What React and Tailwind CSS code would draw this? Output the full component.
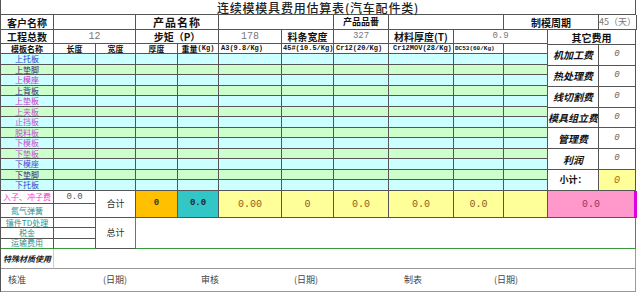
const cjk = { fontFamily: '"Noto Sans CJK SC", "Liberation Sans", sans-serif' };
const mono = { fontFamily: '"Liberation Mono", "Noto Sans CJK SC", monospace' };

const plates = [
  ['上托板', 'text-[#1f3fcf]'],
  ['上垫脚', 'text-[#1a2a80]'],
  ['上模座', 'text-[#cc33cc]'],
  ['上背板', 'text-[#1a2a80]'],
  ['上垫板', 'text-[#cc33cc]'],
  ['上夹板', 'text-[#c24fd0]'],
  ['止挡板', 'text-[#c24fd0]'],
  ['脱料板', 'text-[#c24fd0]'],
  ['下模板', 'text-[#c24fd0]'],
  ['下垫板', 'text-[#c24fd0]'],
  ['下模座', 'text-[#5a3fd0]'],
  ['下垫脚', 'text-[#1a2a80]'],
  ['下托板', 'text-[#1f3fcf]'],
];

const others = ['机加工费', '热处理费', '线切割费', '模具组立费', '管理费', '利润'];

function Cell({ className = '', style, children }) {
  return (
    <div
      style={style}
      className={`flex items-center justify-center overflow-hidden whitespace-nowrap border-r border-b border-[#555] ${className}`}
    >
      {children}
    </div>
  );
}

export default function App() {
  return (
    <div className="w-[640px] h-[293px] bg-white overflow-hidden" style={cjk}>
      <div className="w-[636px] border-l border-[#555]">
        {/* title */}
        <div className="h-[15px] pt-[1px] border-r border-b border-[#555] flex items-center justify-center text-[12px] font-medium leading-[13px] tracking-[0.8px] text-[#222]">
          连续模模具费用估算表(汽车配件类)
        </div>

        {/* row 1 */}
        <div className="h-[15px] grid grid-cols-[53px_82px_83px_115px_55px_115px_95px_38px] text-[#111]">
          <Cell className="text-[10px] font-bold">客户名称</Cell>
          <Cell />
          <Cell className="text-[11px] font-bold tracking-[1px]">产品名称</Cell>
          <Cell />
          <Cell className="text-[9px] font-bold">产品品番</Cell>
          <Cell />
          <Cell className="text-[10px] font-bold">制模周期</Cell>
          <Cell className="text-[9px] text-[#777]">45（天）</Cell>
        </div>

        {/* middle block */}
        <div className="flex">
          <div className="w-[547px]">
            <div className="h-[14px] grid grid-cols-[53px_82px_83px_63px_52px_55px_65px_94px] text-[#111]">
              <Cell className="text-[10px] font-bold">工程总数</Cell>
              <Cell className="text-[10px] text-[#777]" style={mono}>12</Cell>
              <Cell className="text-[10px] font-bold">步矩（P）</Cell>
              <Cell className="text-[10px] text-[#777]" style={mono}>178</Cell>
              <Cell className="text-[10px] font-bold">料条宽度</Cell>
              <Cell className="text-[9px] text-[#777]" style={mono}>327</Cell>
              <Cell className="text-[10px] font-bold">材料厚度(T)</Cell>
              <Cell className="text-[9px] text-[#777]" style={mono}>0.9</Cell>
            </div>
            <div className="h-[10px] grid grid-cols-[53px_42px_40px_42px_41px_63px_52px_55px_65px_50px_44px] text-[#111] font-bold leading-none">
              <Cell className="text-[8px]">模板名称</Cell>
              <Cell className="text-[8px]">长度</Cell>
              <Cell className="text-[8px]">宽度</Cell>
              <Cell className="text-[8px]">厚度</Cell>
              <Cell className="text-[8px]">重量<span style={mono} className="text-[7px]">(Kg)</span></Cell>
              <Cell className="text-[7px] justify-start pl-[2px]" style={mono}>A3(9.8/Kg)</Cell>
              <Cell className="text-[7px] justify-start pl-[1px]" style={mono}>45#(10.5/Kg)</Cell>
              <Cell className="text-[7px] justify-start pl-[2px]" style={mono}>Cr12(20/Kg)</Cell>
              <Cell className="text-[7px] justify-start pl-[4px]" style={mono}>Cr12MOV(28/Kg)</Cell>
              <Cell className="text-[6px] justify-start pl-[1px]" style={mono}>DC53(60/Kg)</Cell>
              <Cell />
            </div>
            {plates.map(([name, color], i) => (
              <div
                key={name}
                className={`grid grid-cols-[53px_42px_40px_42px_41px_63px_52px_55px_65px_50px_44px] ${i % 2 === 0 ? 'h-[11px] bg-[#ccffff]' : 'h-[10px] bg-[#ccffcc]'}`}
              >
                <Cell className={`text-[8px] leading-none ${color}`}>{name}</Cell>
                <Cell /><Cell /><Cell /><Cell /><Cell /><Cell /><Cell /><Cell /><Cell /><Cell />
              </div>
            ))}
          </div>

          <div className="w-[89px] flex flex-col">
            <Cell className="h-[15px] text-[10px] font-bold text-[#111]">其它费用</Cell>
            {others.map((o) => (
              <div key={o} className="flex-1 flex">
                <Cell className="w-[51px] text-[10px] font-bold italic text-[#111]">{o}</Cell>
                <Cell className="flex-1 text-[9px] italic text-[#666]" style={mono}>0</Cell>
              </div>
            ))}
            <div className="flex-1 flex">
              <Cell className="w-[51px] text-[9px] font-bold text-[#111]">小计：</Cell>
              <Cell className="flex-1 bg-[#ffff99] text-[10px] italic text-[#a07010]" style={mono}>0</Cell>
            </div>
          </div>
        </div>

        {/* 合计 */}
        <div className="h-[27px] grid grid-cols-[53px_42px_40px_42px_41px_63px_52px_55px_65px_50px_44px_89px] grid-rows-[13px_14px]">
          <Cell className="text-[8px] text-[#ff33cc]">入子、冲子费</Cell>
          <Cell className="text-[9px] text-[#555] items-start" style={mono}>0.0</Cell>
          <Cell className="row-span-2 text-[9px] text-[#333]">合计</Cell>
          <Cell className="row-span-2 bg-[#ffc000] text-[9px] font-bold text-[#333]" style={mono}>0</Cell>
          <Cell className="row-span-2 bg-[#33c6c6] text-[9px] font-bold text-[#223]" style={mono}>0.0</Cell>
          <Cell className="row-span-2 bg-[#ffff99] text-[10px] text-[#8a5a20]" style={mono}>0.00</Cell>
          <Cell className="row-span-2 bg-[#ffff99] text-[10px] text-[#8a5a20]" style={mono}>0</Cell>
          <Cell className="row-span-2 bg-[#ffff99] text-[10px] text-[#8a5a20]" style={mono}>0.0</Cell>
          <Cell className="row-span-2 bg-[#ffff99] text-[10px] text-[#8a5a20]" style={mono}>0.0</Cell>
          <Cell className="row-span-2 bg-[#ffff99] text-[10px] text-[#8a5a20]" style={mono}>0.0</Cell>
          <Cell className="row-span-2 bg-[#ffff99]" />
          <Cell className="row-span-2 bg-[#ff99cc] text-[10px] text-[#993366] border-r-[3px] border-r-[#e000e0]" style={mono}>0.0</Cell>
          <Cell className="text-[8px] text-[#2f8f8f]">氮气弹簧</Cell>
          <Cell />
        </div>

        {/* 总计 */}
        <div className="h-[31px] grid grid-cols-[53px_42px_40px_1fr] grid-rows-3">
          <Cell className="text-[8px] text-[#2f8f8f]">镶件TD处理</Cell>
          <Cell />
          <Cell className="row-span-3 text-[9px] text-[#333] border-r-[#3a9a3a]">总计</Cell>
          <Cell className="row-span-3 border-r-[#3a9a3a] border-b-[#3a9a3a]" />
          <Cell className="text-[8px] text-[#2f8f8f]">税金</Cell>
          <Cell />
          <Cell className="text-[8px] text-[#2f8f8f] border-b-[#3a9a3a]">运输费用</Cell>
          <Cell className="border-b-[#3a9a3a]" />
        </div>

        {/* 特殊材质使用 */}
        <div className="h-[20px] grid grid-cols-[53px_1fr]">
          <Cell className="text-[8px] font-bold italic text-[#222] border-r-[#ccc] border-b-[#999]">特殊材质使用</Cell>
          <Cell className="border-r-[#999] border-b-[#999]" />
        </div>

        {/* signatures */}
        <div className="h-[23px] grid grid-cols-[95px_98px_93px_110px_90px_150px] border-r border-b border-[#999] text-[9px] text-[#444] items-center">
          <div className="pl-[7px]">核准</div>
          <div className="pl-[7px]">(日期)</div>
          <div className="pl-[7px]">审核</div>
          <div className="pl-[7px]">(日期)</div>
          <div className="pl-[7px]">制表</div>
          <div className="pl-[7px]">(日期)</div>
        </div>
      </div>
    </div>
  );
}
